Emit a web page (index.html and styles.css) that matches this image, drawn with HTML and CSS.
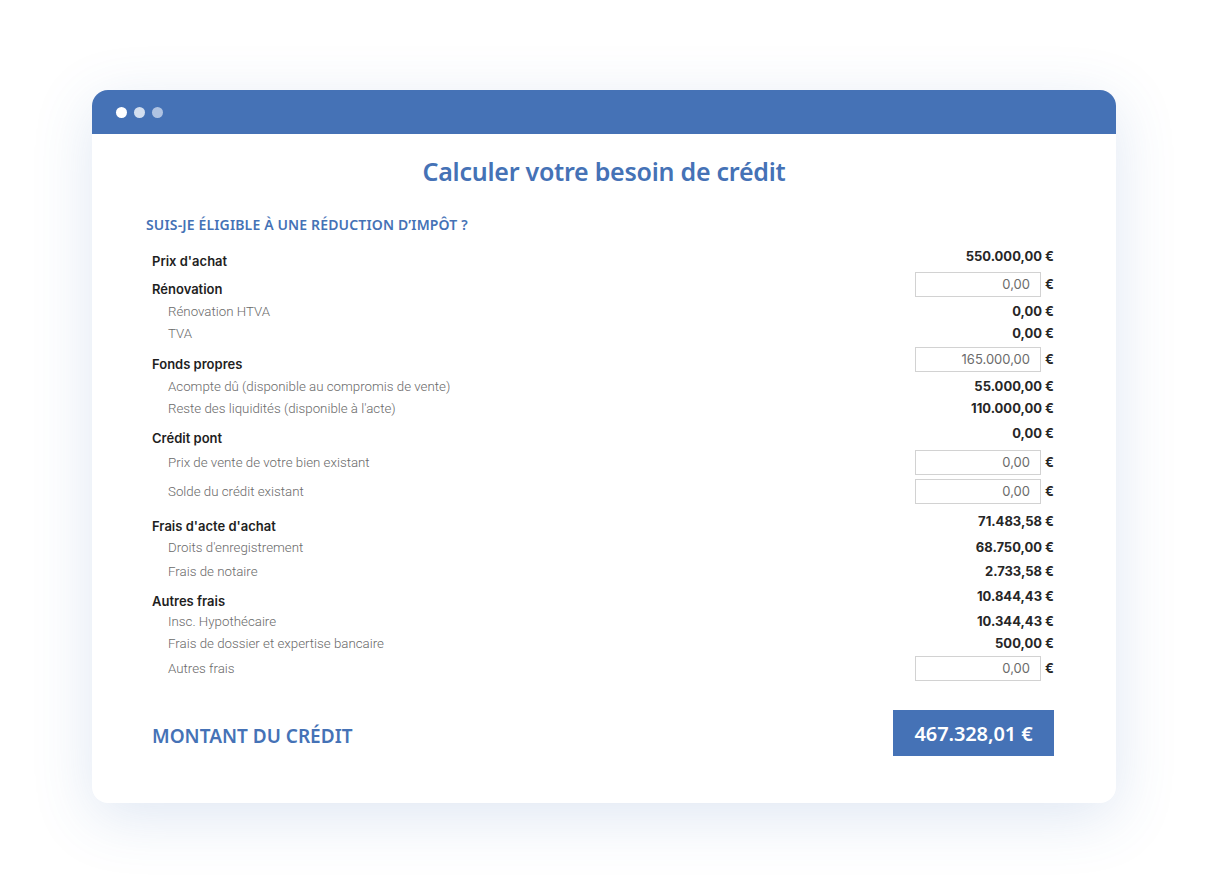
FILE: index.html
```html
<!DOCTYPE html>
<html lang="fr">
<head>
<meta charset="utf-8">
<title>Calculer votre besoin de crédit</title>
<link rel="stylesheet" href="styles.css">
</head>
<body>
<div class="window">
  <div class="titlebar">
    <span class="dot d1"></span><span class="dot d2"></span><span class="dot d3"></span>
  </div>
  <div class="content">
    <h1 class="title">Calculer votre besoin de crédit</h1>
    <h2 class="subtitle">SUIS-JE ÉLIGIBLE À UNE RÉDUCTION D’IMPÔT ?</h2>
    <div class="table">
      <div class="row grp m0"><span class="label">Prix d'achat</span><span class="value">550.000,00 €</span></div>
      <div class="row grp in m4"><span class="label">Rénovation</span><span class="field"><input class="input" type="text" value="0,00" readonly><span class="cur">€</span></span></div>
      <div class="row m3"><span class="label">Rénovation HTVA</span><span class="value">0,00 €</span></div>
      <div class="row m0"><span class="label">TVA</span><span class="value">0,00 €</span></div>
      <div class="row grp in m2"><span class="label">Fonds propres</span><span class="field"><input class="input" type="text" value="165.000,00" readonly><span class="cur">€</span></span></div>
      <div class="row m3"><span class="label">Acompte dû (disponible au compromis de vente)</span><span class="value">55.000,00 €</span></div>
      <div class="row m0"><span class="label">Reste des liquidités (disponible à l'acte)</span><span class="value">110.000,00 €</span></div>
      <div class="row grp m3"><span class="label">Crédit pont</span><span class="value">0,00 €</span></div>
      <div class="row in m5"><span class="label">Prix de vente de votre bien existant</span><span class="field"><input class="input" type="text" value="0,00" readonly><span class="cur">€</span></span></div>
      <div class="row in m3"><span class="label">Solde du crédit existant</span><span class="field"><input class="input" type="text" value="0,00" readonly><span class="cur">€</span></span></div>
      <div class="row grp m6"><span class="label">Frais d'acte d'achat</span><span class="value">71.483,58 €</span></div>
      <div class="row m4"><span class="label">Droits d'enregistrement</span><span class="value">68.750,00 €</span></div>
      <div class="row m2"><span class="label">Frais de notaire</span><span class="value">2.733,58 €</span></div>
      <div class="row grp m3"><span class="label">Autres frais</span><span class="value">10.844,43 €</span></div>
      <div class="row m3"><span class="label">Insc. Hypothécaire</span><span class="value">10.344,43 €</span></div>
      <div class="row m0"><span class="label">Frais de dossier et expertise bancaire</span><span class="value">500,00 €</span></div>
      <div class="row in m1"><span class="label">Autres frais</span><span class="field"><input class="input" type="text" value="0,00" readonly><span class="cur">€</span></span></div>
    </div>
    <div class="total">
      <span class="total-label">MONTANT DU CRÉDIT</span>
      <span class="total-value">467.328,01 €</span>
    </div>
  </div>
</div>
</body>
</html>
```

FILE: styles.css
```css
html, body {
  margin: 0;
  padding: 0;
  background: #ffffff;
}
body {
  min-height: 893px;
  box-sizing: border-box;
  padding: 90px 92px 91px 92px;
  font-family: Inter, "Liberation Sans", sans-serif;
}
.window {
  width: 1024px;
  border-radius: 16px;
  overflow: hidden;
  background: #ffffff;
  box-shadow: 0 14px 60px rgba(68, 114, 182, 0.17);
}
.titlebar {
  height: 44px;
  background: #4572b6;
  display: flex;
  align-items: center;
  gap: 7px;
  padding-left: 24px;
}
.dot {
  width: 11px;
  height: 11px;
  border-radius: 50%;
  display: block;
}
.d1 { background: #ffffff; }
.d2 { background: #d3dff0; }
.d3 { background: #afc3e2; }

.content {
  padding: 21px 62px 47px 54px;
}
.title {
  margin: 0;
  text-align: center;
  font-family: "Noto Sans", "Open Sans", sans-serif;
  font-weight: 600;
  font-size: 25px;
  line-height: 32px;
  letter-spacing: -0.25px;
  color: #4572b6;
  margin-right: -8px;
}
.subtitle {
  margin: 29px 0 0 0;
  font-family: "Noto Sans", "Open Sans", sans-serif;
  font-weight: 600;
  font-size: 14px;
  line-height: 18px;
  letter-spacing: 0.15px;
  color: #4572b6;
}
.table {
  margin-top: 11px;
  padding-left: 6px;
  display: flex;
  flex-direction: column;
}
.row {
  height: 22px;
  display: flex;
  align-items: center;
  justify-content: space-between;
  font-size: 13px;
}
.row.in { height: 26px; }
.m0 { margin-top: 0; }
.m1 { margin-top: 1px; }
.m2 { margin-top: 2px; }
.m3 { margin-top: 3px; }
.m4 { margin-top: 4px; }
.m5 { margin-top: 5px; }
.m6 { margin-top: 6px; }

.label {
  padding-left: 16px;
  font-family: Roboto, Inter, sans-serif;
  font-weight: 300;
  font-size: 13.3px;
  color: #6a6a6a;
}
.grp .label {
  padding-left: 0;
  padding-top: 9px;
  font-family: Inter, "Liberation Sans", sans-serif;
  font-size: 13px;
  font-weight: 600;
  color: #1f1f1f;
}
.value {
  font-weight: 700;
  color: #262626;
}
.field {
  display: flex;
  align-items: center;
  gap: 4px;
}
.input {
  box-sizing: border-box;
  width: 126px;
  height: 25px;
  margin: 0 0 0 1px;
  border: 1px solid #d2d2d2;
  border-radius: 0;
  padding: 0 10px 0 4px;
  text-align: right;
  font-family: Inter, "Liberation Sans", sans-serif;
  font-size: 13px;
  font-weight: 400;
  color: #6b6b6b;
  background: #ffffff;
  outline: none;
}
.cur {
  font-weight: 700;
  color: #262626;
  width: 9px;
}
.total {
  margin-top: 29px;
  padding-left: 6px;
  display: flex;
  align-items: center;
  justify-content: space-between;
}
.total-label {
  padding-top: 6px;
  font-family: "Noto Sans", "Open Sans", sans-serif;
  font-weight: 600;
  font-size: 19px;
  letter-spacing: 0px;
  color: #4572b6;
}
.total-value {
  width: 161px;
  height: 46px;
  display: flex;
  align-items: center;
  justify-content: center;
  background: #4572b6;
  color: #ffffff;
  font-family: "Noto Sans", "Open Sans", sans-serif;
  font-weight: 600;
  font-size: 20px;
  letter-spacing: -0.1px;
}
```
